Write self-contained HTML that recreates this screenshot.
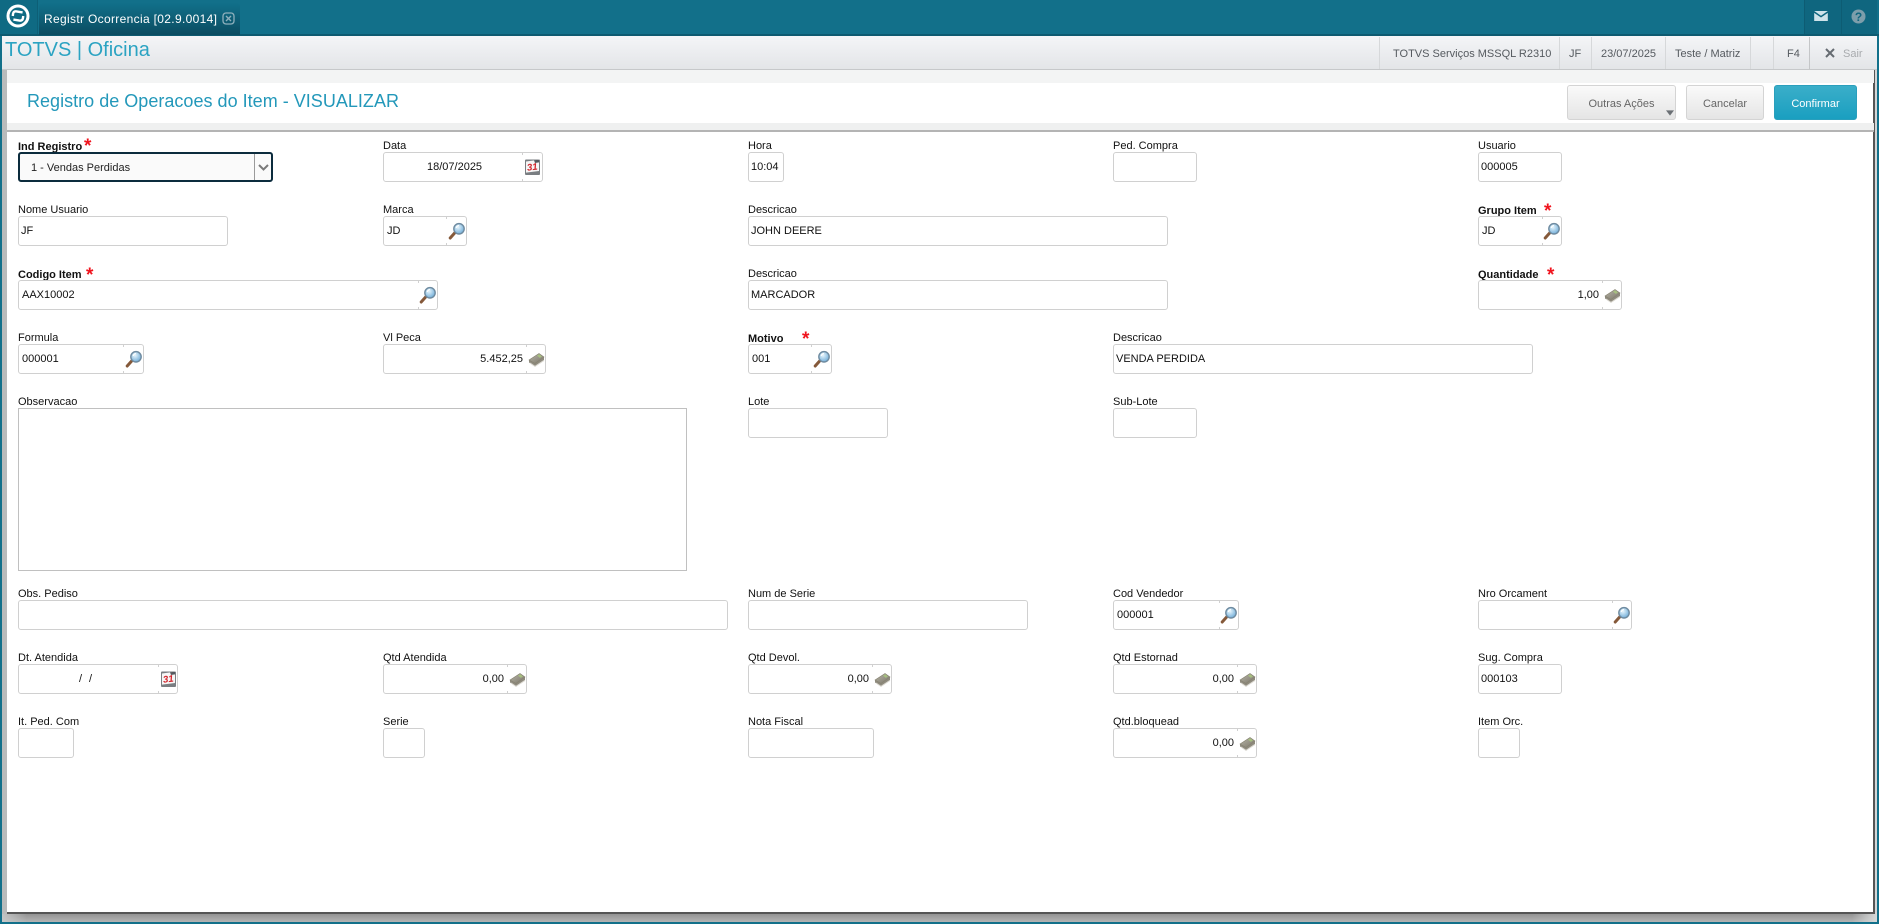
<!DOCTYPE html>
<html lang="pt">
<head>
<meta charset="utf-8">
<title>Registro de Operacoes do Item</title>
<style>
html,body{margin:0;padding:0;width:1879px;height:924px;overflow:hidden;background:#12708a;font-family:"Liberation Sans",Arial,sans-serif;color:#111}
*{box-sizing:border-box}
.a{position:absolute}
#top{left:0;top:0;width:1879px;height:36px;background:#12708a;border-bottom:2px solid #0d5a70}
#logo{left:0;top:0;width:38px;height:34px;background:#0f6a83;border-right:1px solid #0d5f76}
#tab{left:39px;top:3px;width:201px;height:32px;background:linear-gradient(#11708a,#0b4c61);border-radius:3px 3px 0 0;color:#fff;font-size:12px;line-height:32px;padding-left:5px;letter-spacing:.33px;white-space:nowrap}
.tc{top:0;height:34px;background:#0f667f;border-left:1px solid #0d5c73}
#tb{left:2px;top:36px;width:1875px;height:34px;background:linear-gradient(#f4f5f7,#e3e5e8);border-bottom:1px solid #c6c8ca}
#brand{left:5px;top:36px;font-size:20px;line-height:28px;color:#2ba3c2;white-space:nowrap}
.sp{top:37px;width:1px;height:32px;background:#d6d8da}
.ti{top:37px;height:32px;line-height:34px;font-size:11px;color:#555a5f;white-space:nowrap}
#strip{left:2px;top:70px;width:5px;height:844px;background:#b9bbbb}
#shadowb{left:2px;top:913px;width:1875px;height:9px;background:linear-gradient(90deg,rgba(200,202,202,.9) 0,rgba(200,202,202,0) 25px,rgba(200,202,202,0) calc(100% - 25px),rgba(215,217,217,1) 100%),linear-gradient(#8f8f8f,#b4b4b4)}
#shadowr{left:1874px;top:70px;width:3px;height:852px;background:#d4d5d5}
#panel{left:7px;top:70px;width:1868px;height:844px;background:#fff;border-right:2px solid #555;border-bottom:2px solid #555}
#band1{left:7px;top:70px;width:1867px;height:13px;background:#f3f4f4}
#band2{left:7px;top:123px;width:1867px;height:7px;background:#eff0f0}
#line{left:7px;top:130px;width:1867px;height:2px;background:#b4b4b4}
#title{left:27px;top:88px;font-size:18px;line-height:26px;color:#2398ba;white-space:nowrap;letter-spacing:.02px}
.btn{top:85px;height:35px;border:1px solid #d4d4d4;border-radius:3px;background:linear-gradient(#fafafa,#e5e5e5);color:#666;font-size:11px;text-align:center;line-height:35px;padding-top:1px}
.l{position:absolute;font-size:11px;line-height:14px;white-space:nowrap;color:#111;margin-top:1px}
.l.b{font-weight:bold}
.f{position:absolute;height:30px;border:1px solid #d0d0d0;border-radius:3px;background:#fff;font-size:11px;line-height:29px;padding-left:3px;white-space:nowrap;color:#111}
.d{position:absolute;top:0;width:1px;height:28px}
.d::before,.d::after{content:"";position:absolute;left:0;width:1px;height:2px;background:#d0d0d0}
.d::before{top:0}
.d::after{bottom:0}
.v{position:absolute;top:0;line-height:29px}
.req{position:absolute;color:#f0141e;font-weight:bold;font-size:19px;line-height:20px;width:10px;height:12px;overflow:visible}
svg.i{position:absolute;width:18px;height:18px;top:5px;overflow:visible}
</style>
</head>
<body>
<svg width="0" height="0" style="position:absolute">
<defs>
<radialGradient id="gl" cx=".4" cy=".35" r=".7"><stop offset="0" stop-color="#e8f6fd"/><stop offset="1" stop-color="#6aa9d6"/></radialGradient>
<linearGradient id="gm" x1="0" y1="0" x2="1" y2="1"><stop offset="0" stop-color="#b8b6a9"/><stop offset="1" stop-color="#7a7568"/></linearGradient>
<symbol id="lens" viewBox="0 0 18 18">
<path d="M3.2 16 L8 10.6" stroke="#85593a" stroke-width="3" stroke-linecap="round"/>
<circle cx="12" cy="6.8" r="5.2" fill="url(#gl)" stroke="#6f8ba0" stroke-width="1.4"/>
<path d="M9.2 6 A3.2 3.2 0 0 1 12 3.6" stroke="#fff" stroke-width="1.1" fill="none"/>
</symbol>
<symbol id="money" viewBox="0 0 18 18">
<path d="M2 10.5 L12 4 L17 7.5 L17 10 L8 16 L2 12.5Z" fill="#8f8b7f"/>
<path d="M2 10 L12 3.5 L17 7 L8 13.5Z" fill="url(#gm)" stroke="#85816f" stroke-width=".6"/>
<path d="M10 5.6 L12.2 4.3 L15 6.5 L12.8 7.9Z" fill="#a6c07f"/>
<path d="M3 13 L8 16.4 L17 10.4" stroke="#dcdad2" stroke-width="1" fill="none"/>
</symbol>
<symbol id="cal" viewBox="0 0 18 18">
<rect x="2" y="1.5" width="15" height="15.5" rx="1" fill="#7a7e82"/>
<path d="M3 3.5 L16 1.8 L16 13 L3 14.6Z" fill="#f6f6f6"/>
<path d="M11 2.3 L16 1.8 L16 4.4 L12 5Z" fill="#55595e"/>
<text x="4" y="12.2" font-family="Liberation Sans,Arial,sans-serif" font-size="9.5" font-weight="bold" font-style="italic" fill="#d2232a" transform="rotate(-7 9 9)">31</text>
</symbol>
</defs>
</svg>

<div id="top" class="a"></div>
<div id="logo" class="a"></div>
<svg class="a" style="left:5px;top:3px" width="26" height="26" viewBox="0 0 26 26">
<circle cx="13" cy="13" r="10" fill="none" stroke="#fff" stroke-width="3"/>
<path d="M17.6 9.4 L11.5 8.4 Q8.5 8 8 11 L7.8 13" fill="none" stroke="#fff" stroke-width="2.4"/>
<path d="M8.4 16.6 L14.5 17.6 Q17.5 18 18 15 L18.2 13" fill="none" stroke="#fff" stroke-width="2.4"/>
</svg>
<div id="tab" class="a">Registr Ocorrencia [02.9.0014]</div>
<svg class="a" style="left:222px;top:12px" width="13" height="13" viewBox="0 0 13 13">
<rect x="1" y="1" width="11" height="11" rx="3" fill="none" stroke="#8fb0bc" stroke-width="1.3"/>
<path d="M4 4 L9 9 M9 4 L4 9" stroke="#8fb0bc" stroke-width="1.4"/>
</svg>

<div class="a tc" style="left:1804px;width:37px"></div>
<div class="a tc" style="left:1841px;width:36px"></div>
<svg class="a" style="left:1814px;top:11px" width="14" height="10" viewBox="0 0 15 11">
<path d="M0 0H15L7.5 5.2Z M0 2L7.5 7.2 15 2V11H0Z" fill="#cfe3ea"/>
</svg>
<svg class="a" style="left:1851px;top:9px" width="15" height="15" viewBox="0 0 15 15">
<circle cx="7.5" cy="7.5" r="7" fill="#7d9eab"/>
<text x="7.5" y="12" text-anchor="middle" font-family="Liberation Sans,Arial,sans-serif" font-size="12" font-weight="bold" fill="#0f667f">?</text>
</svg>

<div id="tb" class="a"></div>
<div id="brand" class="a">TOTVS | Oficina</div>
<div class="a sp" style="left:1379px"></div>
<div class="a sp" style="left:1559px"></div>
<div class="a sp" style="left:1591px"></div>
<div class="a sp" style="left:1665px"></div>
<div class="a sp" style="left:1750px"></div>
<div class="a sp" style="left:1773px"></div>
<div class="a sp" style="left:1809px;background:#c4c6c8"></div>
<div class="a ti" style="left:1393px">TOTVS Serviços MSSQL R2310</div>
<div class="a ti" style="left:1569px">JF</div>
<div class="a ti" style="left:1601px">23/07/2025</div>
<div class="a ti" style="left:1675px">Teste / Matriz</div>
<div class="a ti" style="left:1787px">F4</div>
<svg class="a" style="left:1825px;top:48px" width="10" height="10" viewBox="0 0 10 10"><path d="M1 1L9 9M9 1L1 9" stroke="#666c72" stroke-width="2"/></svg>
<div class="a ti" style="left:1843px;color:#a8abae">Sair</div>

<div id="shadowr" class="a"></div>
<div id="shadowb" class="a"></div>
<div id="strip" class="a"></div>
<div id="panel" class="a"></div>
<div id="band1" class="a"></div>
<div id="band2" class="a"></div>
<div id="line" class="a"></div>
<div id="title" class="a">Registro de Operacoes do Item - VISUALIZAR</div>

<div class="a btn" style="left:1567px;width:109px">Outras Ações</div>
<svg class="a" style="left:1666px;top:110px" width="8" height="6" viewBox="0 0 9 6"><path d="M0 0H9L4.5 6Z" fill="#6b7075"/></svg>
<div class="a btn" style="left:1686px;width:78px">Cancelar</div>
<div class="a btn" style="left:1774px;width:83px;background:linear-gradient(#3aaec9,#1a9fc0);border-color:#2a9fbc;color:#fff;font-weight:normal">Confirmar</div>

<!-- Row 1 -->
<div class="l b" style="left:18px;top:139px">Ind Registro</div><div class="req" style="left:84px;top:137px">*</div>
<div class="a" style="left:18px;top:152px;width:255px;height:30px;border:2px solid #0c2c3d;border-radius:3px;background:#fafafa;font-size:11px;line-height:28px;padding-left:11px;color:#222">1 - Vendas Perdidas</div>
<div class="a" style="left:254px;top:154px;width:1px;height:26px;background:#9a9a9a"></div>
<svg class="a" style="left:258px;top:164px" width="11" height="7" viewBox="0 0 11 7"><path d="M1 1L5.5 5.5 10 1" fill="none" stroke="#7a7a7a" stroke-width="2"/></svg>

<div class="l" style="left:383px;top:138px">Data</div>
<div class="f" style="left:383px;top:152px;width:160px"><span class="v" style="left:43px">18/07/2025</span><span class="d" style="left:138px"></span><svg class="i" style="left:139px"><use href="#cal"/></svg></div>
<div class="l" style="left:748px;top:138px">Hora</div>
<div class="f" style="left:748px;top:152px;width:36px;padding-left:2px">10:04</div>
<div class="l" style="left:1113px;top:138px">Ped. Compra</div>
<div class="f" style="left:1113px;top:152px;width:84px"></div>
<div class="l" style="left:1478px;top:138px">Usuario</div>
<div class="f" style="left:1478px;top:152px;width:84px;padding-left:2px">000005</div>

<!-- Row 2 -->
<div class="l" style="left:18px;top:202px">Nome Usuario</div>
<div class="f" style="left:18px;top:216px;width:210px;padding-left:2px">JF</div>
<div class="l" style="left:383px;top:202px">Marca</div>
<div class="f" style="left:383px;top:216px;width:84px">JD<span class="d" style="left:62px"></span><svg class="i" style="left:63px"><use href="#lens"/></svg></div>
<div class="l" style="left:748px;top:202px">Descricao</div>
<div class="f" style="left:748px;top:216px;width:420px;padding-left:2px">JOHN DEERE</div>
<div class="l b" style="left:1478px;top:203px">Grupo Item</div><div class="req" style="left:1544px;top:202px">*</div>
<div class="f" style="left:1478px;top:216px;width:84px">JD<span class="d" style="left:63px"></span><svg class="i" style="left:63px"><use href="#lens"/></svg></div>

<!-- Row 3 -->
<div class="l b" style="left:18px;top:267px">Codigo Item</div><div class="req" style="left:86px;top:266px">*</div>
<div class="f" style="left:18px;top:280px;width:420px">AAX10002<span class="d" style="left:399px"></span><svg class="i" style="left:399px"><use href="#lens"/></svg></div>
<div class="l" style="left:748px;top:266px">Descricao</div>
<div class="f" style="left:748px;top:280px;width:420px;padding-left:2px">MARCADOR</div>
<div class="l b" style="left:1478px;top:267px">Quantidade</div><div class="req" style="left:1547px;top:266px">*</div>
<div class="f" style="left:1478px;top:280px;width:144px"><span class="v" style="right:22px">1,00</span><span class="d" style="left:123px"></span><svg class="i" style="left:124px"><use href="#money"/></svg></div>

<!-- Row 4 -->
<div class="l" style="left:18px;top:330px">Formula</div>
<div class="f" style="left:18px;top:344px;width:126px">000001<span class="d" style="left:104px"></span><svg class="i" style="left:105px"><use href="#lens"/></svg></div>
<div class="l" style="left:383px;top:330px">Vl Peca</div>
<div class="f" style="left:383px;top:344px;width:163px"><span class="v" style="right:22px">5.452,25</span><span class="d" style="left:142px"></span><svg class="i" style="left:143px"><use href="#money"/></svg></div>
<div class="l b" style="left:748px;top:331px">Motivo</div><div class="req" style="left:802px;top:330px">*</div>
<div class="f" style="left:748px;top:344px;width:84px">001<span class="d" style="left:62px"></span><svg class="i" style="left:63px"><use href="#lens"/></svg></div>
<div class="l" style="left:1113px;top:330px">Descricao</div>
<div class="f" style="left:1113px;top:344px;width:420px;padding-left:2px">VENDA PERDIDA</div>

<!-- Row 5 -->
<div class="l" style="left:18px;top:394px">Observacao</div>
<div class="f" style="left:18px;top:408px;width:669px;height:163px;border-color:#c0c0c0;border-radius:0"></div>
<div class="l" style="left:748px;top:394px">Lote</div>
<div class="f" style="left:748px;top:408px;width:140px"></div>
<div class="l" style="left:1113px;top:394px">Sub-Lote</div>
<div class="f" style="left:1113px;top:408px;width:84px"></div>

<!-- Row 6 -->
<div class="l" style="left:18px;top:586px">Obs. Pediso</div>
<div class="f" style="left:18px;top:600px;width:710px"></div>
<div class="l" style="left:748px;top:586px">Num de Serie</div>
<div class="f" style="left:748px;top:600px;width:280px"></div>
<div class="l" style="left:1113px;top:586px">Cod Vendedor</div>
<div class="f" style="left:1113px;top:600px;width:126px">000001<span class="d" style="left:105px"></span><svg class="i" style="left:105px"><use href="#lens"/></svg></div>
<div class="l" style="left:1478px;top:586px">Nro Orcament</div>
<div class="f" style="left:1478px;top:600px;width:154px"><span class="d" style="left:133px"></span><svg class="i" style="left:133px"><use href="#lens"/></svg></div>

<!-- Row 7 -->
<div class="l" style="left:18px;top:650px">Dt. Atendida</div>
<div class="f" style="left:18px;top:664px;width:160px"><span class="v" style="left:60px">/</span><span class="v" style="left:70px">/</span><span class="d" style="left:139px"></span><svg class="i" style="left:140px"><use href="#cal"/></svg></div>
<div class="l" style="left:383px;top:650px">Qtd Atendida</div>
<div class="f" style="left:383px;top:664px;width:144px"><span class="v" style="right:22px">0,00</span><span class="d" style="left:123px"></span><svg class="i" style="left:124px"><use href="#money"/></svg></div>
<div class="l" style="left:748px;top:650px">Qtd Devol.</div>
<div class="f" style="left:748px;top:664px;width:144px"><span class="v" style="right:22px">0,00</span><span class="d" style="left:123px"></span><svg class="i" style="left:124px"><use href="#money"/></svg></div>
<div class="l" style="left:1113px;top:650px">Qtd Estornad</div>
<div class="f" style="left:1113px;top:664px;width:144px"><span class="v" style="right:22px">0,00</span><span class="d" style="left:123px"></span><svg class="i" style="left:124px"><use href="#money"/></svg></div>
<div class="l" style="left:1478px;top:650px">Sug. Compra</div>
<div class="f" style="left:1478px;top:664px;width:84px;padding-left:2px">000103</div>

<!-- Row 8 -->
<div class="l" style="left:18px;top:714px">It. Ped. Com</div>
<div class="f" style="left:18px;top:728px;width:56px"></div>
<div class="l" style="left:383px;top:714px">Serie</div>
<div class="f" style="left:383px;top:728px;width:42px"></div>
<div class="l" style="left:748px;top:714px">Nota Fiscal</div>
<div class="f" style="left:748px;top:728px;width:126px"></div>
<div class="l" style="left:1113px;top:714px">Qtd.bloquead</div>
<div class="f" style="left:1113px;top:728px;width:144px"><span class="v" style="right:22px">0,00</span><span class="d" style="left:123px"></span><svg class="i" style="left:124px"><use href="#money"/></svg></div>
<div class="l" style="left:1478px;top:714px">Item Orc.</div>
<div class="f" style="left:1478px;top:728px;width:42px"></div>
</body>
</html>
